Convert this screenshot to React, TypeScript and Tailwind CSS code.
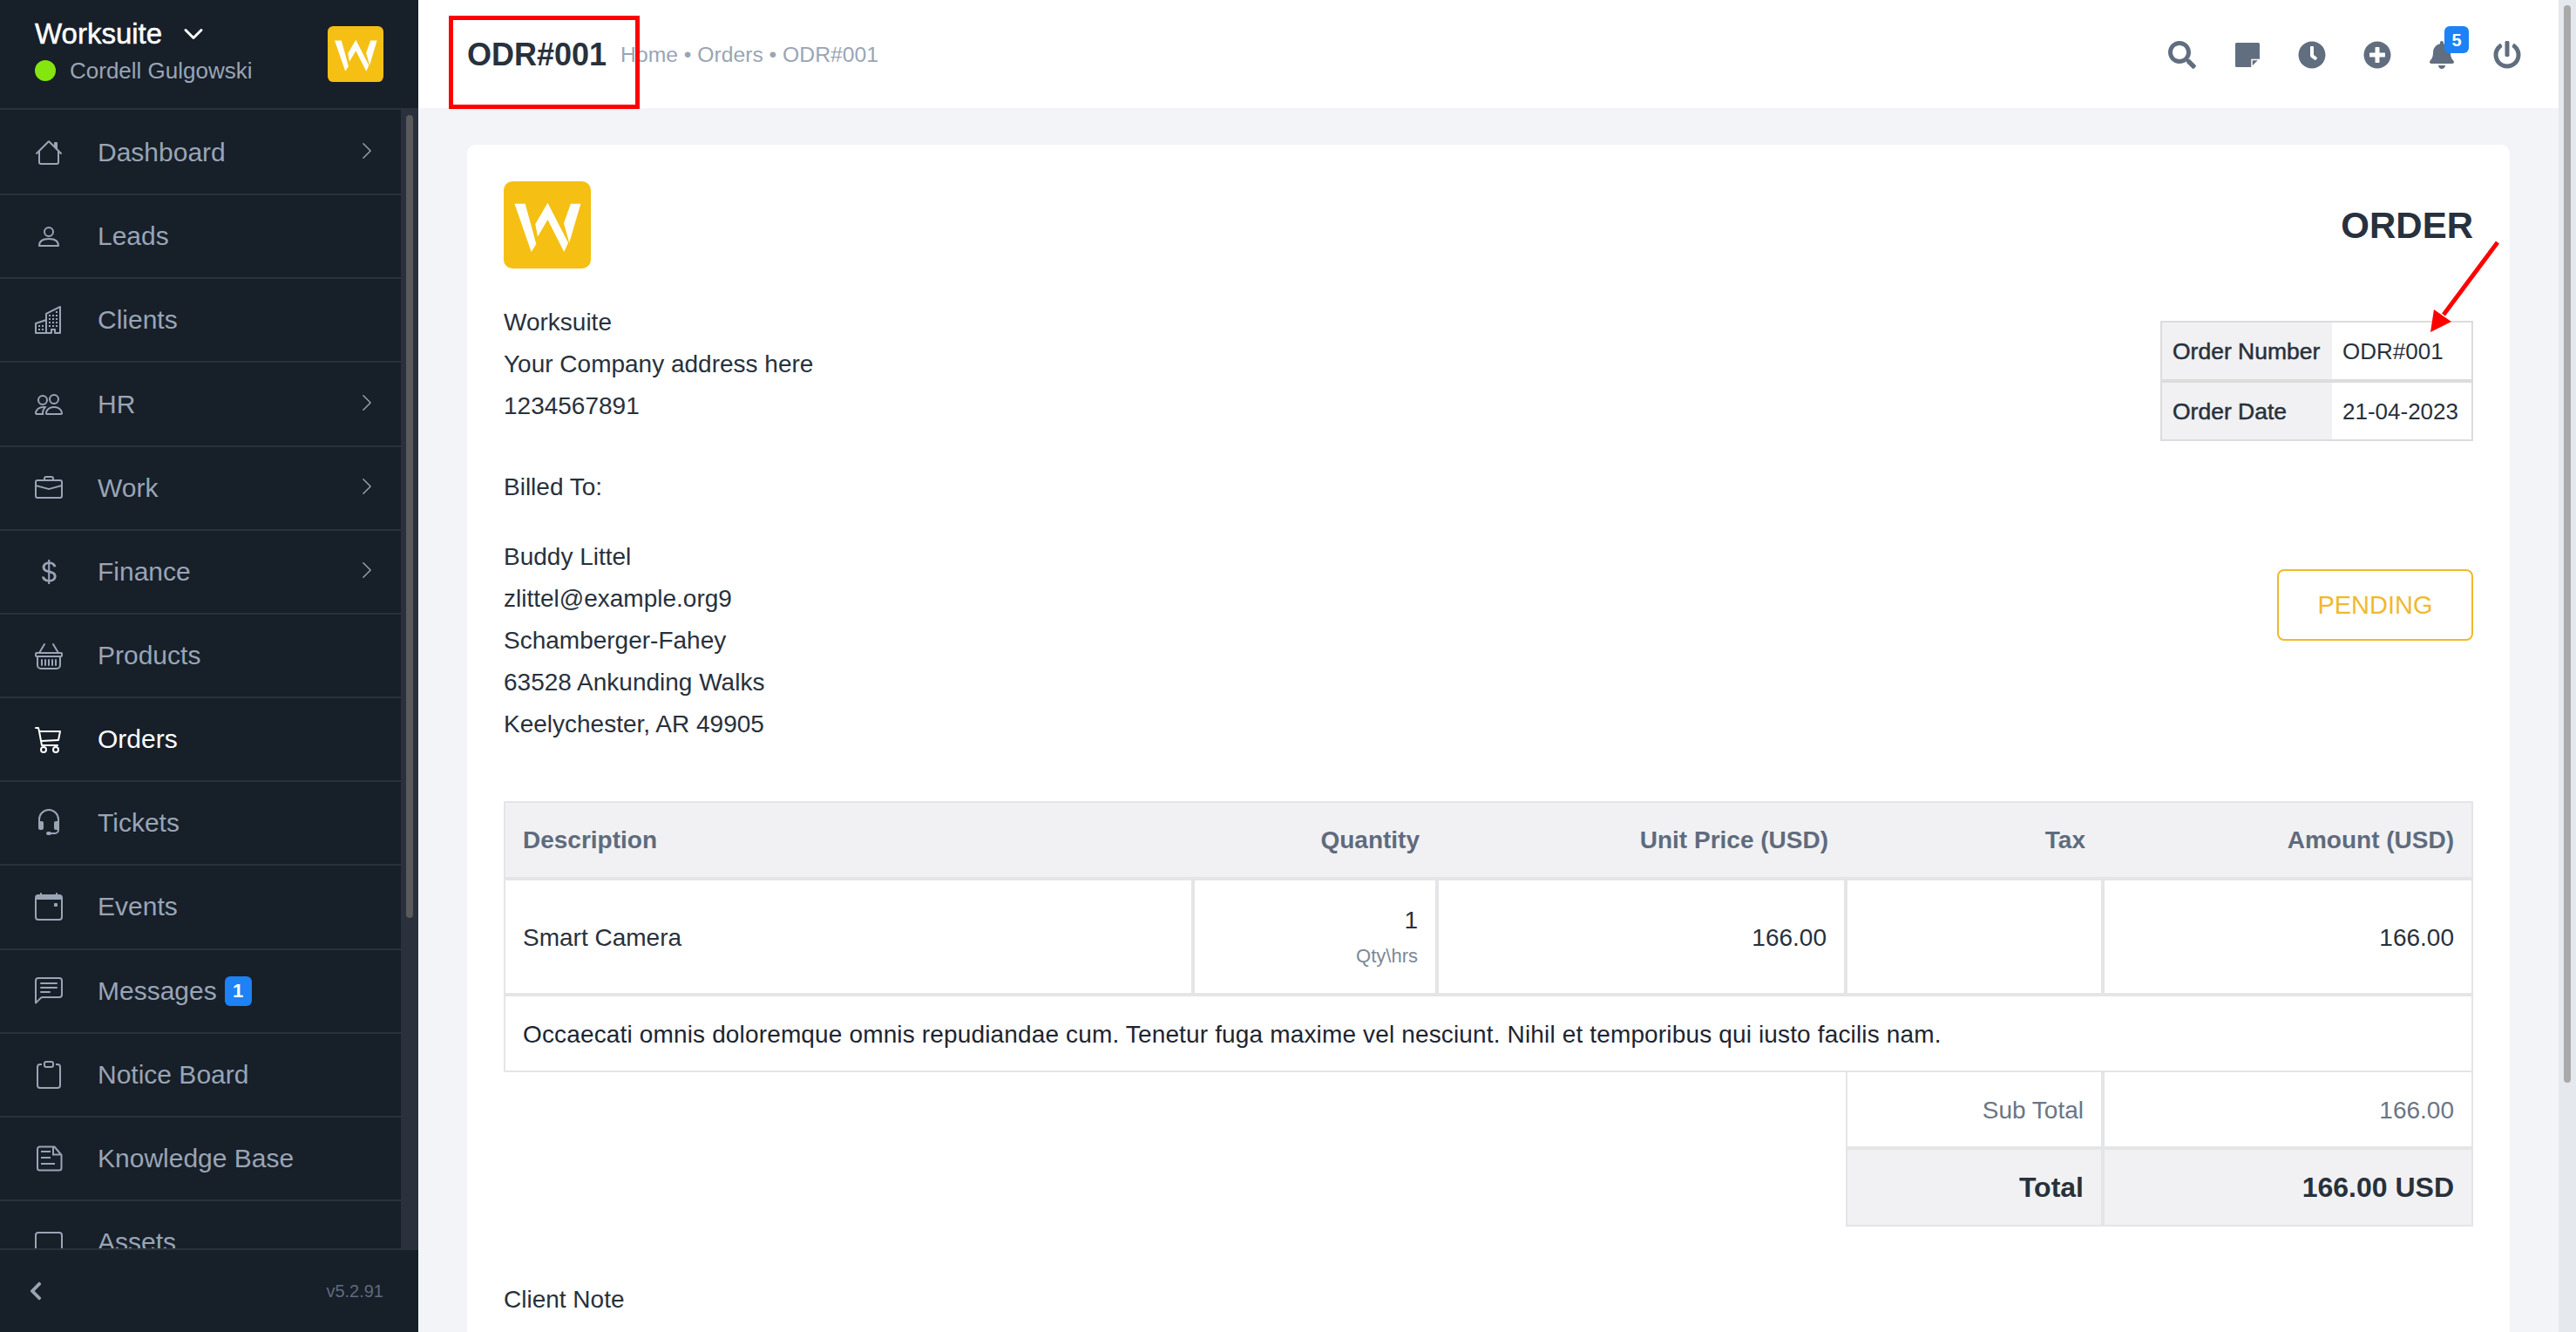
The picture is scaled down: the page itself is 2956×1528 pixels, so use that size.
import { ReactNode } from "react";
import {
  BsBriefcase,
  BsBuildings,
  BsCalendarEvent,
  BsCart3,
  BsChatLeftText,
  BsChevronDown,
  BsChevronRight,
  BsClipboard,
  BsCurrencyDollar,
  BsHeadset,
  BsHouse,
  BsPeople,
  BsBasket,
} from "react-icons/bs";
import { FaBell, FaChevronLeft, FaClock, FaPlusCircle, FaPowerOff, FaSearch } from "react-icons/fa";

function LogoMark({ className }: { className: string }) {
  return (
    <svg viewBox="0 0 100 100" className={className}>
      <rect width="100" height="100" rx="10" fill="#f5c013" />
      <path d="M12.5 25.8H24.7L37.3 72L31.7 81Z" fill="#fff" />
      <path d="M50.5 24.8L74 70.5L69.3 81L50.5 44L39 63.6L36.3 49Z" fill="#fff" />
      <path d="M76.9 25.8H88.4L75.2 70.5L69 48Z" fill="#fff" />
    </svg>
  );
}

function PersonIcon() {
  return (
    <svg viewBox="0 0 32 32" className="h-8 w-8" fill="none" stroke="currentColor" strokeWidth="2">
      <circle cx="16" cy="11" r="5" />
      <path d="M5 27c0-6 5-8 11-8s11 2 11 8z" strokeLinejoin="round" />
    </svg>
  );
}

function KnowledgeIcon() {
  return (
    <svg viewBox="0 0 32 32" className="h-8 w-8" fill="none" stroke="currentColor" strokeWidth="2">
      <path d="M4 2.5h17l8 9.5v15a2.500 2.500 0 0 1-2.500 2.500h-22.500a2.500 2.500 0 0 1-2.500-2.500v-22a2.500 2.500 0 0 1 2.500-2.500z" transform="translate(1.500 0)" strokeLinejoin="round" />
      <path d="M21 3v8.500h8" />
      <path d="M7 8h11M7 15h11M7 22h16" />
    </svg>
  );
}

function AssetsIcon() {
  return (
    <svg viewBox="0 0 32 32" className="h-8 w-8" fill="none" stroke="currentColor" strokeWidth="2">
      <rect x="1" y="5" width="30" height="24" rx="3" />
    </svg>
  );
}

function StickyIcon() {
  return (
    <svg viewBox="0 0 28 28" className="h-7 w-7">
      <path d="M1.500 0h25A1.500 1.500 0 0 1 28 1.500V19l-9 9H1.500A1.500 1.500 0 0 1 0 26.500v-25A1.500 1.500 0 0 1 1.500 0z" fill="#616e80" />
      <path d="M19 19.500h8.500L19 28z" fill="#616e80" stroke="#fff" strokeWidth="1.500" />
    </svg>
  );
}

const navItems: { label: string; icon: ReactNode; arrow?: boolean; badge?: string; active?: boolean }[] = [
  { label: "Dashboard", icon: <BsHouse size={32} />, arrow: true },
  { label: "Leads", icon: <PersonIcon /> },
  { label: "Clients", icon: <BsBuildings size={32} /> },
  { label: "HR", icon: <BsPeople size={32} />, arrow: true },
  { label: "Work", icon: <BsBriefcase size={32} />, arrow: true },
  { label: "Finance", icon: <BsCurrencyDollar size={32} />, arrow: true },
  { label: "Products", icon: <BsBasket size={32} /> },
  { label: "Orders", icon: <BsCart3 size={32} />, active: true },
  { label: "Tickets", icon: <BsHeadset size={32} /> },
  { label: "Events", icon: <BsCalendarEvent size={32} /> },
  { label: "Messages", icon: <BsChatLeftText size={32} />, badge: "1" },
  { label: "Notice Board", icon: <BsClipboard size={32} /> },
  { label: "Knowledge Base", icon: <KnowledgeIcon /> },
  { label: "Assets", icon: <AssetsIcon /> },
];

function Sidebar() {
  return (
    <aside className="flex h-full w-[480px] shrink-0 flex-col bg-[#171f29]">
      <div className="flex h-[126px] shrink-0 items-start justify-between border-b-2 border-[#2a313d] pl-[40px] pr-[40px]">
        <div className="pt-[19px]">
          <div className="flex items-center gap-[24px] text-[33px] leading-[40px] text-white [-webkit-text-stroke:0.5px_#fff]">
            Worksuite
            <BsChevronDown size={24} className="[&_path]:stroke-1" />
          </div>
          <div className="mt-[4px] flex items-center gap-[16px] text-[26px] leading-[36px] text-[#99a5b5]">
            <span className="h-[24px] w-[24px] rounded-full bg-[#84e60e]" />
            Cordell Gulgowski
          </div>
        </div>
        <LogoMark className="mt-[30px] h-[64px] w-[64px]" />
      </div>

      <div className="relative flex min-h-0 flex-1 overflow-hidden">
        <div className="flex-1 pt-[2px]">
          {navItems.map((item) => (
            <div
              key={item.label}
              className={`flex h-[96.170px] items-center border-b-2 border-[#2a313d] pl-[40px] pr-[28px] ${
                item.active ? "text-white" : "text-[#99a5b5]"
              }`}
            >
              <span className="flex w-[72px] shrink-0">{item.icon}</span>
              <span className="text-[30px] leading-[40px]">{item.label}</span>
              {item.badge && (
                <span className="ml-[9px] flex h-[34px] w-[31px] items-center justify-center rounded-[6px] bg-[#1d82f5] text-[22px] font-bold text-white">
                  {item.badge}
                </span>
              )}
              {item.arrow && <BsChevronRight size={22} className="mb-[4px] ml-auto" />}
            </div>
          ))}
        </div>
        <div className="w-[20px] shrink-0 bg-[#2a313d] px-[6px] pt-[6px]">
          <div className="h-[921px] rounded-full bg-[#5a5a5a]" />
        </div>
      </div>

      <div className="flex h-[96px] shrink-0 items-center justify-between border-t-2 border-[#2a313d] pl-[29px] pr-[40px]">
        <FaChevronLeft size={24} className="text-[#99a5b5]" />
        <span className="text-[20px] text-[#5f6b7d]">v5.2.91</span>
      </div>
    </aside>
  );
}

function TopBar() {
  return (
    <header className="flex h-[124px] shrink-0 items-center justify-between bg-white pl-[56px] pr-[22px] pt-[2px]">
      <div className="flex items-center gap-[16px]">
        <h1 className="text-[36px] font-bold leading-[44px] text-[#28313c]">ODR#001</h1>
        <span className="text-[24.700px] text-[#99a5b5]">Home • Orders • ODR#001</span>
      </div>
      <div className="flex items-center text-[#616e80]">
        <div className="flex w-[74.500px] justify-center"><FaSearch size={32} /></div>
        <div className="flex w-[74.500px] justify-center"><StickyIcon /></div>
        <div className="flex w-[74.500px] justify-center"><FaClock size={32} /></div>
        <div className="flex w-[74.500px] justify-center"><FaPlusCircle size={32} /></div>
        <div className="relative flex w-[74.500px] justify-center">
          <FaBell size={32} />
          <span className="absolute left-[40px] top-[-17px] flex h-[31px] w-[28px] items-center justify-center rounded-[6px] bg-[#1d82f5] text-[20px] font-bold text-white">5</span>
        </div>
        <div className="flex w-[74.500px] justify-center"><FaPowerOff size={32} /></div>
      </div>
    </header>
  );
}

function InvoiceTable() {
  const head = "h-[89px] border-y-2 border-[#e4e5e7] bg-[#f1f1f3] px-[20px] text-right text-[28px] font-bold text-[#5f6b7d]";
  const cell = "border-2 border-[#e4e5e7] px-[20px] pt-[2px] text-right text-[28px]";
  const total = "border-2 border-[#e4e5e7] bg-[#f1f1f3] px-[20px] text-right text-[32px] font-bold";
  return (
    <table className="mt-[64px] w-[2260px] table-fixed border-separate border-spacing-0 text-[#28313c]">
      <colgroup>
        <col className="w-[791px]" />
        <col className="w-[280px]" />
        <col className="w-[469px]" />
        <col className="w-[295px]" />
        <col className="w-[425px]" />
      </colgroup>
      <thead>
        <tr>
          <th className={`${head} border-l-2 !text-left`}>Description</th>
          <th className={head}>Quantity</th>
          <th className={head}>Unit Price (USD)</th>
          <th className={head}>Tax</th>
          <th className={`${head} border-r-2`}>Amount (USD)</th>
        </tr>
      </thead>
      <tbody>
        <tr>
          <td className={`${cell} h-[133px] !text-left`}>Smart Camera</td>
          <td className={`${cell} pb-[4px]`}>
            <div className="leading-[40px]">1</div>
            <div className="mt-[6px] text-[22px] leading-[30px] text-[#7d8896]">Qty\hrs</div>
          </td>
          <td className={cell}>166.00</td>
          <td className={cell}></td>
          <td className={cell}>166.00</td>
        </tr>
        <tr>
          <td colSpan={5} className={`${cell} h-[89px] !text-left tracking-[0.15px] text-[#1d2530]`}>
            Occaecati omnis doloremque omnis repudiandae cum. Tenetur fuga maxime vel nesciunt. Nihil et temporibus qui iusto facilis nam.
          </td>
        </tr>
        <tr>
          <td colSpan={3}></td>
          <td className={`${cell} h-[87px] border-t-0 text-[#6b7685]`}>Sub Total</td>
          <td className={`${cell} border-t-0 text-[#6b7685]`}>166.00</td>
        </tr>
        <tr>
          <td colSpan={3}></td>
          <td className={`${total} h-[90px]`}>Total</td>
          <td className={total}>166.00 USD</td>
        </tr>
      </tbody>
    </table>
  );
}

function OrderCard() {
  const label = "h-[69px] border-l-2 border-y-2 border-[#dcdcdc] bg-[#f1f1f3] pl-[12px] pr-[8px] text-left text-[26.500px] font-normal [-webkit-text-stroke:0.5px_#28313c]";
  const value = "h-[69px] border-r-2 border-y-2 border-[#dcdcdc] pl-[12px] pr-[8px] text-left text-[26px] font-normal";
  return (
    <section className="rounded-[10px] bg-white p-[42px]">
      <div className="flex justify-between text-[28px] leading-[48px] text-[#28313c]">
        <div>
          <LogoMark className="h-[100px] w-[100px]" />
          <div className="mt-[38px]">
            <p>Worksuite</p>
            <p>Your Company address here</p>
            <p>1234567891</p>
          </div>
          <p className="mt-[45px]">Billed To:</p>
          <div className="mt-[32px]">
            <p>Buddy Littel</p>
            <p>zlittel@example.org9</p>
            <p>Schamberger-Fahey</p>
            <p>63528 Ankunding Walks</p>
            <p>Keelychester, AR 49905</p>
          </div>
        </div>
        <div className="flex flex-col items-end">
          <h2 className="mt-[27px] text-[42px] font-bold text-[#28313c]">ORDER</h2>
          <table className="mt-[85px] w-[359px] table-fixed border-separate border-spacing-0 leading-[32px]">
            <colgroup>
              <col className="w-[197px]" />
              <col className="w-[162px]" />
            </colgroup>
            <tbody>
              <tr>
                <th className={label}>Order Number</th>
                <td className={value}>ODR#001</td>
              </tr>
              <tr>
                <th className={label}>Order Date</th>
                <td className={value}>21-04-2023</td>
              </tr>
            </tbody>
          </table>
          <div className="mt-[147px] flex h-[82px] w-[225px] items-center justify-center rounded-[8px] border-2 border-[#f0b92d] text-[29px] text-[#f0b92d]">
            PENDING
          </div>
        </div>
      </div>
      <InvoiceTable />
      <p className="mt-[60px] text-[28px] leading-[48px] text-[#28313c]">Client Note</p>
    </section>
  );
}

export default function App() {
  return (
    <div className="relative flex h-[1528px] w-[2956px] overflow-hidden font-['Liberation_Sans',Arial,sans-serif]">
      <Sidebar />
      <div className="flex min-w-0 flex-1 flex-col">
        <TopBar />
        <main className="min-h-0 flex-1 overflow-hidden bg-[#f2f4f7] px-[56px] pt-[42px]">
          <OrderCard />
        </main>
      </div>
      <div className="w-[20px] shrink-0 bg-[#e5e8ec] px-[6px] pt-[6px]">
        <div className="h-[1236px] rounded-full bg-[#a9a9a9]" />
      </div>

      {/* red annotations drawn over the screenshot */}
      <div className="absolute left-[515px] top-[18px] h-[107px] w-[219px] border-[5px] border-[#ff0000]" />
      <svg className="absolute left-[2780px] top-[270px] h-[120px] w-[100px]" viewBox="0 0 100 120">
        <path d="M86 8L24 91" stroke="#ff0000" strokeWidth="5" fill="none" />
        <path d="M9 111L13 85L33 99Z" fill="#ff0000" />
      </svg>
    </div>
  );
}
